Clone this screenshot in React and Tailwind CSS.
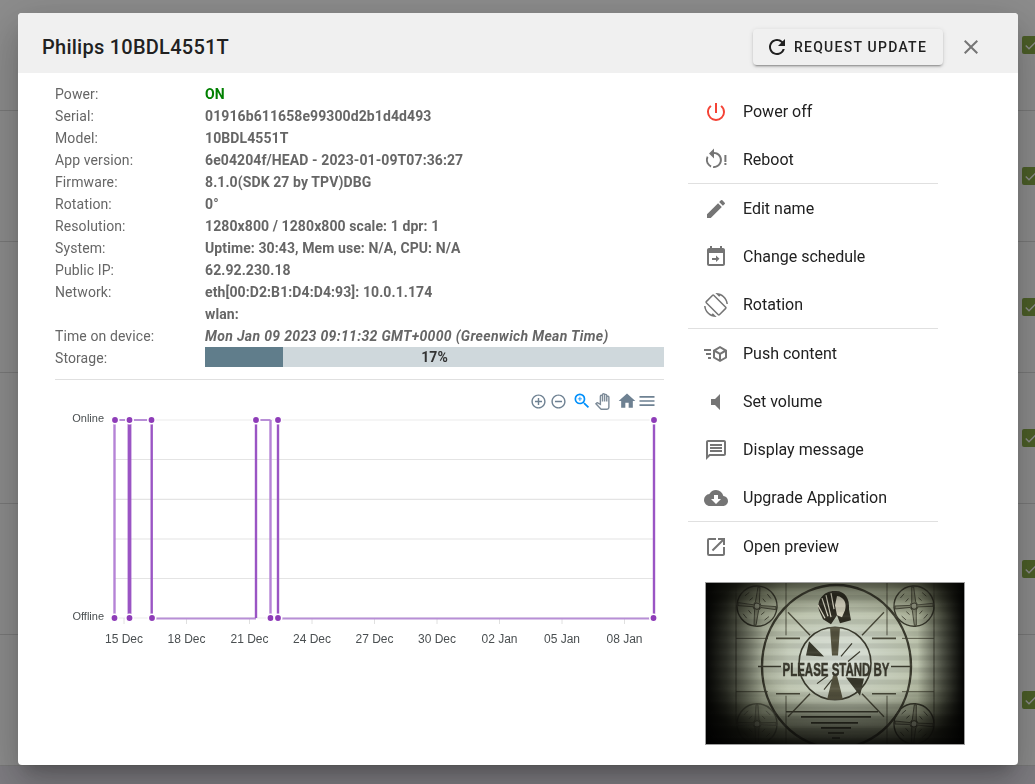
import {
  MdCheck, MdClose, MdCloudDownload, MdEdit, MdHome, MdMenu, MdOpenInNew, MdOutlineMessage,
  MdOutlinePanTool, MdPowerSettingsNew, MdRefresh, MdScreenRotation, MdVolumeMute, MdZoomIn,
} from "react-icons/md"

const infoRows = [
  ["Power:", "ON"],
  ["Serial:", "01916b611658e99300d2b1d4d493"],
  ["Model:", "10BDL4551T"],
  ["App version:", "6e04204f/HEAD - 2023-01-09T07:36:27"],
  ["Firmware:", "8.1.0(SDK 27 by TPV)DBG"],
  ["Rotation:", "0°"],
  ["Resolution:", "1280x800 / 1280x800 scale: 1 dpr: 1"],
  ["System:", "Uptime: 30:43, Mem use: N/A, CPU: N/A"],
  ["Public IP:", "62.92.230.18"],
  ["Network:", "eth[00:D2:B1:D4:D4:93]: 10.0.1.174"],
  ["", "wlan:"],
]

function RebootIcon() {
  return (
    <svg viewBox="0 0 24 24" width="24" height="24" fill="currentColor">
      <path transform="translate(-2 0)" d="M12,4C14.1,4 16.1,4.8 17.6,6.3C20.7,9.4 20.7,14.5 17.6,17.6C15.8,19.5 13.3,20.2 10.9,19.9L11.4,17.9C13.1,18.1 14.9,17.5 16.2,16.2C18.5,13.9 18.5,10.1 16.2,7.7C15.1,6.6 13.5,6 12,6V10.6L7,5.6L12,0.6V4M6.3,17.6C3.7,15 3.2,11 4.9,7.9L6.4,9.4C5.3,11.6 5.7,14.4 7.6,16.2C8.1,16.7 8.7,17.1 9.4,17.4L8.8,19.4C7.9,19 7,18.4 6.3,17.6Z" />
      <path d="M20.4 7h2v7h-2zM20.4 15h2v2h-2z" />
    </svg>
  )
}

function ScheduleIcon() {
  return (
    <svg viewBox="0 0 24 24" width="24" height="24" fill="currentColor">
      <path d="M19 3h-1V1h-2v2H8V1H6v2H5c-1.11 0-1.99.9-1.99 2L3 19c0 1.1.89 2 2 2h14c1.1 0 2-.9 2-2V5c0-1.1-.9-2-2-2zm0 16H5V8h14v11z" />
      <path d="M8 13h4v-2.5l3.5 3.25L12 17v-2H8z" />
    </svg>
  )
}

function CubeSendIcon() {
  return (
    <svg viewBox="0 0 24 24" width="24" height="24" fill="currentColor">
      <path d="M16,4L9,8.04V15.96L16,20L23,15.96V8.04M16,6.31L19.8,8.5L16,10.69L12.21,8.5M0,7V9H7V7M11,10.32L15,12.62V17.19L11,14.9M21,10.32V14.9L17,17.19V12.62M2,11V13H7V11M4,15V17H7V15" />
    </svg>
  )
}

const menuGroups = [
  [
    ["Power off", <MdPowerSettingsNew size={24} className="text-[#f44336]" />],
    ["Reboot", <RebootIcon />],
  ],
  [
    ["Edit name", <MdEdit size={24} />],
    ["Change schedule", <ScheduleIcon />],
    ["Rotation", <MdScreenRotation size={24} />],
  ],
  [
    ["Push content", <CubeSendIcon />],
    ["Set volume", <MdVolumeMute size={24} />],
    ["Display message", <MdOutlineMessage size={24} />],
    ["Upgrade Application", <MdCloudDownload size={24} />],
  ],
  [["Open preview", <MdOpenInNew size={24} />]],
]

function ChartToolbar() {
  return (
    <div className="flex h-[18px] items-center justify-end pr-[7px] text-[#6e8192]">
      <svg viewBox="0 0 24 24" width="17" height="17" fill="currentColor" className="mr-[3px]">
        <path d="M13 7h-2v4H7v2h4v4h2v-4h4v-2h-4V7zm-1-5C6.48 2 2 6.48 2 12s4.48 10 10 10 10-4.48 10-10S17.52 2 12 2zm0 18c-4.41 0-8-3.59-8-8s3.59-8 8-8 8 3.59 8 8-3.59 8-8 8z" />
      </svg>
      <svg viewBox="0 0 24 24" width="17" height="17" fill="currentColor" className="mr-[5px]">
        <path d="M7 11v2h10v-2H7zm5-9C6.48 2 2 6.48 2 12s4.48 10 10 10 10-4.48 10-10S17.52 2 12 2zm0 18c-4.41 0-8-3.59-8-8s3.59-8 8-8 8 3.59 8 8-3.59 8-8 8z" />
      </svg>
      <MdZoomIn size={20} className="mr-[2px] text-[#008ffb]" />
      <MdOutlinePanTool size={17} className="mr-[6px] text-[#7d8b98]" />
      <MdHome size={20} />
      <MdMenu size={20} />
    </div>
  )
}

const gridY = [420, 459.5, 499.3, 539, 578.5, 618]
const ticks = [
  [124, "15 Dec"], [186.5, "18 Dec"], [249.5, "21 Dec"], [312, "24 Dec"], [374.5, "27 Dec"],
  [437, "30 Dec"], [499.5, "02 Jan"], [562, "05 Jan"], [624.5, "08 Jan"],
]
const dark = "#9a55c4"
const light = "#b583d6"

function UptimeChart() {
  const vertical = [
    [114.5, light, 2.4], [128.6, dark, 2], [130.2, dark, 2.4], [151.7, dark, 2.4],
    [256, dark, 2.4], [270.5, light, 2.4], [278, dark, 2.4], [654, dark, 2.4],
  ]
  const top = [115, 129.5, 151.5, 256, 278, 654]
  const bottom = [114.5, 129.5, 152, 270.5, 278, 653.5]
  return (
    <svg viewBox="55 410 609 240" width="609" height="240" className="block">
      {gridY.map((y) => (
        <line key={y} x1="115" x2="655" y1={y} y2={y} stroke={y === 420 || y === 618 ? "#ececec" : "#e4e4e4"} strokeWidth="1.2" />
      ))}
      {ticks.map(([x]) => (
        <line key={x} x1={x} x2={x} y1="618" y2="624" stroke="#e0e0e0" />
      ))}
      <path d="M115 420H129M130 420H151.5M256 420H270.5M152 618.5H256M278 618.5H654" fill="none" stroke="#b88fd6" strokeWidth="1.8" />
      {vertical.map(([x, color, w]) => (
        <line key={x} x1={x} x2={x} y1="420" y2="618" stroke={color} strokeWidth={w} />
      ))}
      {top.map((x) => (
        <circle key={x} cx={x} cy="420" r="3.7" fill="#8e3cb8" stroke="#fff" strokeWidth="1.6" />
      ))}
      {bottom.map((x) => (
        <circle key={x} cx={x} cy="618" r="3.7" fill="#8e3cb8" stroke="#fff" strokeWidth="1.6" />
      ))}
      <g fontFamily="'Liberation Sans', Arial, sans-serif" fontSize="11" fill="#4a4f51">
        <text x="104" y="422" textAnchor="end">Online</text>
        <text x="104" y="620" textAnchor="end">Offline</text>
        {ticks.map(([x, label]) => (
          <text key={label} x={x} y="643" textAnchor="middle" fontSize="12">{label}</text>
        ))}
      </g>
    </svg>
  )
}

function TestCard({ cx, cy, rot = 0, opacity = 1 }) {
  return (
    <g transform={`translate(${cx} ${cy}) rotate(${rot})`} fill="none" stroke="#3a3a2d" opacity={opacity}>
      <circle r="20" strokeWidth="1.4" />
      <path d="M-19 -1.5L-4 -1L-2 -4L-1 -19L1 -19L2 -4L4 -1L19 -1.5L19 1.5L4 1L2 4L1 19L-1 19L-2 4L-4 1L-19 1.5Z" strokeWidth="0.8" fill="#5a5a48" fillOpacity="0.4" />
      <circle r="3" strokeWidth="1" fill="#8d907c" />
      <path d="M-13 -9L-9 -13M13 -9L9 -13M-13 9L-9 13M13 9L9 13M-8 -5L-5 -8M8 -5L5 -8M-8 5L-5 8M8 5L5 8" strokeWidth="0.8" />
    </g>
  )
}

function StandByPicture() {
  return (
    <svg viewBox="0 0 258 160" preserveAspectRatio="none" className="block h-full w-full">
      <defs>
        <radialGradient id="glow" cx="52%" cy="46%" r="60%">
          <stop offset="0%" stopColor="#d7dfd6" />
          <stop offset="50%" stopColor="#bcc3ad" />
          <stop offset="80%" stopColor="#8c9277" />
          <stop offset="100%" stopColor="#4a4d38" />
        </radialGradient>
        <linearGradient id="sides" x1="0" x2="1" y1="0" y2="0">
          <stop offset="0%" stopColor="#000" stopOpacity="0.95" />
          <stop offset="8%" stopColor="#000" stopOpacity="0.7" />
          <stop offset="22%" stopColor="#000" stopOpacity="0.12" />
          <stop offset="32%" stopColor="#000" stopOpacity="0" />
          <stop offset="82%" stopColor="#000" stopOpacity="0" />
          <stop offset="92%" stopColor="#000" stopOpacity="0.55" />
          <stop offset="100%" stopColor="#000" stopOpacity="0.97" />
        </linearGradient>
        <linearGradient id="topBottom" x1="0" x2="0" y1="0" y2="1">
          <stop offset="0%" stopColor="#000" stopOpacity="0.35" />
          <stop offset="18%" stopColor="#000" stopOpacity="0" />
          <stop offset="68%" stopColor="#000" stopOpacity="0" />
          <stop offset="100%" stopColor="#000" stopOpacity="0.82" />
        </linearGradient>
        <pattern id="bands" width="10" height="12" patternUnits="userSpaceOnUse">
          <rect width="10" height="5" fill="#000" opacity="0.08" />
          <rect y="8" width="10" height="2" fill="#fff" opacity="0.05" />
        </pattern>
      </defs>
      <rect width="258" height="160" fill="url(#glow)" />
      <g stroke="#4a4a3a" fill="none" strokeWidth="0.9">
        <path d="M30 0V160M228 0V160M80 0V52M181 0V52M80 112V160M181 112V160M30 55H62M196 55H228M30 108H62M196 108H228" />
        <path d="M82 29L104 52M178 29L156 52M82 133L104 110M178 133L156 110" strokeWidth="1.4" />
        <path d="M70 55H94M166 55H190M70 110H94M166 110H190" strokeWidth="1.6" />
      </g>
      <TestCard cx="51" cy="23" rot="6" />
      <TestCard cx="208" cy="23" rot="-4" />
      <TestCard cx="51" cy="140" opacity="0.6" />
      <TestCard cx="208" cy="140" rot="4" />
      <ellipse cx="130.5" cy="83" rx="74.5" ry="81" fill="none" stroke="#3a3a2d" strokeWidth="2.4" />
      <circle cx="129" cy="80" r="36" fill="#dce3da" fillOpacity="0.35" stroke="#3a3a2d" strokeWidth="1.6" />
      <path d="M124 44H134L132 72H126ZM127 92H131L137 116H121Z" fill="#55533f" />
      <path d="M118 73L103 58L100 72ZM140 94L154 112L158 95Z" fill="#3a3a2d" />
      <path d="M146 60L135 73M154 68L142 78M111 100L122 92M118 106L126 96" stroke="#3a3a2d" strokeWidth="1.2" fill="none" />
      <path d="M113 27C110 16 119 7 130 8C139 8 144 16 143 26L145 37L134 40L131 32L125 41L117 36Z" fill="#2f2d22" />
      <path d="M131 13C138 14 141 20 139 27L136 34L131 32L129 22Z" fill="#d4d1bd" />
      <path d="M116 15L122 33M120 12L125 34M125 10L128 26M112 22L119 35" stroke="#d8d5c2" strokeWidth="1.2" fill="none" />
      <path d="M52 83H75M185 83H206" stroke="#3a3a2d" strokeWidth="1.6" />
      <text x="130" y="92" textAnchor="middle" fontFamily="'Liberation Sans', Arial, sans-serif" fontWeight="700" fontSize="18" textLength="107" lengthAdjust="spacingAndGlyphs" fill="#38372b" stroke="#38372b" strokeWidth="0.5">PLEASE STAND BY</text>
      <g stroke="#3a3a2c" strokeWidth="1.6">
        <path d="M80 128H172M95 133H165M105 139H152M115 144H145M122 149H138M126 154H134" />
      </g>
      <rect width="258" height="160" fill="url(#bands)" />
      <rect width="258" height="160" fill="url(#sides)" />
      <rect width="258" height="160" fill="url(#topBottom)" />
    </svg>
  )
}

function Backdrop() {
  return (
    <div className="h-screen overflow-hidden bg-[#e6e3ec]">
      {[0, 1, 2, 3, 4, 5].map((i) => (
        <div key={i} className={i === 0 ? "h-[111px] border-b border-[#dcdcdc] bg-white pt-[36px] pl-[1022px]" : "h-[131px] border-b border-[#dcdcdc] bg-white pt-[56px] pl-[1022px]"}>
          <div className="flex h-[18px] w-[18px] items-center justify-center rounded-[2px] bg-[#8aac48] text-white">
            <MdCheck size={16} />
          </div>
        </div>
      ))}
    </div>
  )
}

export default function App() {
  return (
    <div className="relative h-screen overflow-hidden font-[Roboto,sans-serif]">
      <Backdrop />
      <div className="fixed inset-0 bg-black/45" />
      <div className="fixed top-[13px] left-[18px] flex h-[752px] w-[1000px] flex-col overflow-hidden rounded bg-white shadow-[0_11px_15px_-7px_rgba(0,0,0,0.2),0_24px_38px_3px_rgba(0,0,0,0.14),0_9px_46px_8px_rgba(0,0,0,0.12)]">
        <div className="flex h-[60px] shrink-0 items-center bg-[#f0f0f0] pt-2 pr-[35px] pl-[24px]">
          <h2 className="flex-1 text-[20px] font-medium tracking-[0.25px] text-[#212121]">Philips 10BDL4551T</h2>
          <button className="flex h-9 w-[190px] items-center justify-start gap-[5px] rounded bg-[#f0f0f0] pl-3 text-[14px] font-medium tracking-[1.25px] text-[#212121] shadow-[0_3px_1px_-2px_rgba(0,0,0,0.2),0_2px_2px_0_rgba(0,0,0,0.14),0_1px_5px_0_rgba(0,0,0,0.12)]">
            <MdRefresh size={24} />
            REQUEST UPDATE
          </button>
          <MdClose size={24} className="ml-4 text-[#757575]" />
        </div>

        <div className="flex flex-1">
          <div className="w-[646px] pt-[10px] pl-[37px]">
            {infoRows.map(([label, value], i) => (
              <div key={i} className="flex h-[22px] items-center text-[14px] tracking-[0.1px] text-[#666666]">
                <div className="w-[150px]">{label}</div>
                <div className={i === 0 ? "font-bold text-[#008000]" : "font-bold"}>{value}</div>
              </div>
            ))}
            <div className="flex h-[22px] items-center text-[14px] tracking-[0.1px] text-[#666666]">
              <div className="w-[150px]">Time on device:</div>
              <div className="font-bold tracking-[0.33px] italic">Mon Jan 09 2023 09:11:32 GMT+0000 (Greenwich Mean Time)</div>
            </div>
            <div className="flex h-5 items-center text-[14px] tracking-[0.1px] text-[#666666]">
              <div className="w-[150px] pt-[2px]">Storage:</div>
              <div className="relative h-5 w-[459px] bg-[#cfd8dc]">
                <div className="h-5 w-[17%] bg-[#607d8b]" />
                <div className="absolute inset-0 text-center leading-5 font-bold text-[#333333]">17%</div>
              </div>
            </div>
            <div className="mt-3 h-px w-[609px] bg-[#e0e0e0]" />
            <div className="mt-3 w-[609px]">
              <ChartToolbar />
              <UptimeChart />
            </div>
          </div>

          <div className="ml-[24px] w-[250px] pt-[14px]">
            {menuGroups.map((group, g) => (
              <div key={g} className={g < 3 ? "border-b border-[#e0e0e0]" : ""}>
                {group.map(([label, icon]) => (
                  <div key={label} className="flex h-12 items-center pt-[2px] pl-4 text-[16px] text-[#212121]">
                    <span className="flex w-[39px] text-[#757575]">{icon}</span>
                    {label}
                  </div>
                ))}
              </div>
            ))}
            <div className="mt-[12px] ml-[17px] h-[163px] w-[260px] border border-[#9e9e9e]">
              <StandByPicture />
            </div>
          </div>
        </div>
      </div>
    </div>
  )
}
